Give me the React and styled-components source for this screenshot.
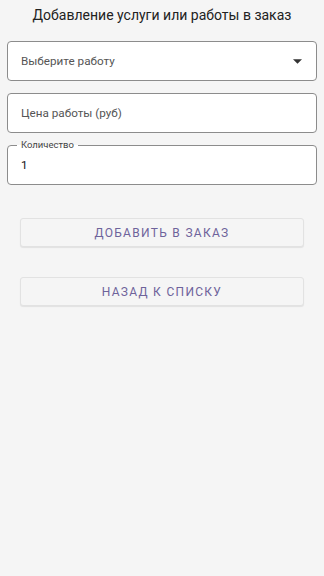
import React from 'react';
import styled, { createGlobalStyle } from 'styled-components';

const GlobalStyle = createGlobalStyle`
  html, body {
    margin: 0;
    padding: 0;
    background: #f5f5f5;
    font-family: Roboto, 'Noto Sans', sans-serif;
  }
`;

const Page = styled.div`
  width: 324px;
  min-height: 576px;
  background: #f5f5f5;
  box-sizing: border-box;
  padding: 5px 7px 0;
  display: flex;
  flex-direction: column;
`;

const Title = styled.h1`
  margin: 0 0 16px;
  font-size: 14px;
  font-weight: 400;
  color: #222;
  text-align: center;
  line-height: 20px;
`;

const Fields = styled.div`
  display: flex;
  flex-direction: column;
  gap: 12px;
`;

const Field = styled.div`
  position: relative;
  height: 40px;
  background: #fff;
  border: 1px solid #8c8c8c;
  border-radius: 4px;
  box-sizing: border-box;
  display: flex;
  align-items: center;
  padding: 0 14px 0 13px;
  font-size: 11.7px;
  color: ${(p) => (p.$filled ? '#111' : '#555')};
`;

const Value = styled.span`
  flex: 1;
`;

const Legend = styled.span`
  position: absolute;
  top: -8px;
  left: 9px;
  padding: 0 4px;
  background: linear-gradient(#f5f5f5 50%, #fff 50%);
  font-size: 9.5px;
  color: #444;
  line-height: 14px;
`;

const Caret = styled.svg`
  width: 9px;
  height: 5px;
  fill: #333;
`;

const Buttons = styled.div`
  display: flex;
  flex-direction: column;
  gap: 30px;
  padding: 33px 13px 0;
`;

const Button = styled.button`
  height: 29px;
  background: #f5f5f5;
  border: 1px solid #e2e2e2;
  border-radius: 3px;
  box-shadow: 0 1px 1px rgba(0, 0, 0, 0.08);
  font-family: Roboto, 'Noto Sans', sans-serif;
  font-size: 12px;
  letter-spacing: 1.3px;
  color: #6e639b;
  text-transform: uppercase;
  cursor: pointer;
`;

export default function App() {
  return (
    <>
      <GlobalStyle />
      <Page>
        <Title>Добавление услуги или работы в заказ</Title>
        <Fields>
          <Field>
            <Value>Выберите работу</Value>
            <Caret viewBox="0 0 10 5">
              <path d="M0 0h10L5 5z" />
            </Caret>
          </Field>
          <Field>
            <Value>Цена работы (руб)</Value>
          </Field>
          <Field $filled>
            <Legend>Количество</Legend>
            <Value>1</Value>
          </Field>
        </Fields>
        <Buttons>
          <Button>Добавить в заказ</Button>
          <Button>Назад к списку</Button>
        </Buttons>
      </Page>
    </>
  );
}
